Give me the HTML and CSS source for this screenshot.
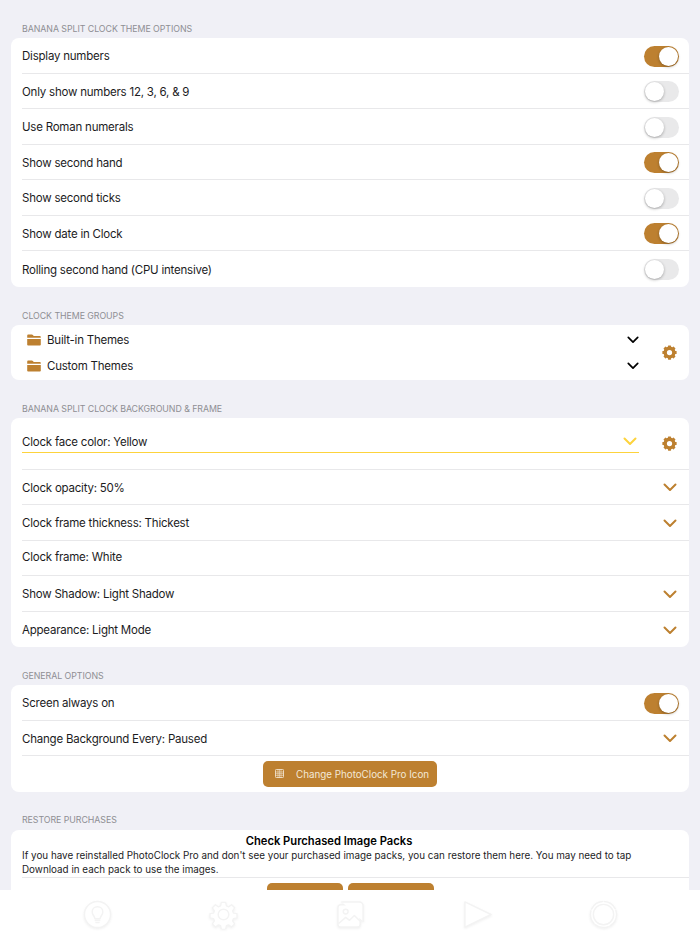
FILE: index.html
```html
<!DOCTYPE html>
<html lang="en">
<head>
    <meta charset="UTF-8">
    <meta name="viewport" content="width=device-width, initial-scale=1.0">
    <title>PhotoClock Pro - Settings</title>
    <link rel="stylesheet" href="styles.css">
</head>
<body>

<svg class="defs" width="0" height="0">
    <symbol id="chevron" viewBox="0 0 14 9"><path d="M1.5 1.500 7 7l5.500-5.500" fill="none" stroke="currentColor" stroke-width="2" stroke-linecap="round" stroke-linejoin="round"/></symbol>
    <symbol id="gear" viewBox="0 0 16 16"><circle cx="8" cy="8" r="4.600" fill="none" stroke="currentColor" stroke-width="3.600"/><g fill="currentColor"><rect x="6.300" y=".4" width="3.400" height="3" rx=".6"/><rect x="6.300" y="12.600" width="3.400" height="3" rx=".6"/><rect x=".4" y="6.300" width="3" height="3.400" rx=".6"/><rect x="12.600" y="6.300" width="3" height="3.400" rx=".6"/><rect x="6.300" y=".4" width="3.400" height="3" rx=".6" transform="rotate(45 8 8)"/><rect x="6.300" y="12.600" width="3.400" height="3" rx=".6" transform="rotate(45 8 8)"/><rect x=".4" y="6.300" width="3" height="3.400" rx=".6" transform="rotate(45 8 8)"/><rect x="12.600" y="6.300" width="3" height="3.400" rx=".6" transform="rotate(45 8 8)"/></g></symbol>
    <symbol id="folder" viewBox="0 0 14 12"><path d="M1.400.5h3.400c.5 0 .8.2 1.100.5l.8.9h5.900c.7 0 1.200.5 1.200 1.200v.7H.2V1.700C.2 1 .7.5 1.400.5Z" fill="currentColor"/><path d="M.2 4.900h13.600v5.500c0 .7-.5 1.100-1.200 1.100H1.400c-.7 0-1.200-.4-1.200-1.100Z" fill="currentColor"/></symbol>
</svg>

<div class="settings">

    <h3 class="section-title">Banana Split Clock Theme Options</h3>
    <div class="card">
        <div class="row"><span>Display numbers</span><span class="switch on"></span></div>
        <div class="row"><span>Only show numbers 12, 3, 6, &amp; 9</span><span class="switch"></span></div>
        <div class="row"><span>Use Roman numerals</span><span class="switch"></span></div>
        <div class="row"><span>Show second hand</span><span class="switch on"></span></div>
        <div class="row"><span>Show second ticks</span><span class="switch"></span></div>
        <div class="row"><span>Show date in Clock</span><span class="switch on"></span></div>
        <div class="row"><span>Rolling second hand (CPU intensive)</span><span class="switch"></span></div>
    </div>

    <h3 class="section-title">Clock Theme Groups</h3>
    <div class="card groups">
        <div class="group-list">
            <div class="group">
                <svg class="folder"><use href="#folder"/></svg>
                <span class="group-name">Built-in Themes</span>
                <svg class="chevron dark"><use href="#chevron"/></svg>
            </div>
            <div class="group">
                <svg class="folder"><use href="#folder"/></svg>
                <span class="group-name">Custom Themes</span>
                <svg class="chevron dark"><use href="#chevron"/></svg>
            </div>
        </div>
        <svg class="gear"><use href="#gear"/></svg>
    </div>

    <h3 class="section-title">Banana Split Clock Background &amp; Frame</h3>
    <div class="card">
        <div class="row row-color">
            <div class="color-select">
                <span>Clock face color: Yellow</span>
                <svg class="chevron yellow"><use href="#chevron"/></svg>
            </div>
            <svg class="gear"><use href="#gear"/></svg>
        </div>
        <div class="row"><span>Clock opacity: 50%</span><svg class="chevron"><use href="#chevron"/></svg></div>
        <div class="row"><span>Clock frame thickness: Thickest</span><svg class="chevron"><use href="#chevron"/></svg></div>
        <div class="row row-frame"><span>Clock frame: White</span></div>
        <div class="row"><span>Show Shadow: Light Shadow</span><svg class="chevron"><use href="#chevron"/></svg></div>
        <div class="row"><span>Appearance: Light Mode</span><svg class="chevron"><use href="#chevron"/></svg></div>
    </div>

    <h3 class="section-title">General Options</h3>
    <div class="card">
        <div class="row"><span>Screen always on</span><span class="switch on"></span></div>
        <div class="row"><span>Change Background Every: Paused</span><svg class="chevron"><use href="#chevron"/></svg></div>
        <div class="row row-center">
            <button class="btn btn-icon">
                <svg class="grid-icon" viewBox="0 0 10 10"><rect x=".5" y=".5" width="9" height="9" rx="1" fill="none" stroke="currentColor"/><path d="M.5 3.300h9M.5 5.200h9M.5 7.100h9M3.300.5v9M5 .5v9M6.700.5v9" stroke="currentColor" stroke-width=".6"/></svg>
                <span class="btn-label">Change PhotoClock Pro Icon</span>
            </button>
        </div>
    </div>

    <h3 class="section-title section-title-last">Restore Purchases</h3>
    <div class="card">
        <div class="restore">
            <h4>Check Purchased Image Packs</h4>
            <p>If you have reinstalled PhotoClock Pro and don't see your purchased image packs, you can restore them here. You may need to tap Download in each pack to use the images.</p>
        </div>
        <div class="restore-buttons">
            <button class="btn btn-restore"></button>
            <button class="btn btn-download"></button>
        </div>
    </div>
</div>

<!-- Tab bar, white icons on white -->
<div class="tabbar">
    <svg class="tab" viewBox="0 0 30 30"><circle cx="15" cy="15" r="13.500"/><path d="M15 7c-3.400 0-5.500 2.500-5.500 5.300 0 3 2.300 4 2.800 7h5.400c.5-3 2.800-4 2.800-7C20.500 9.500 18.400 7 15 7Zm-2.300 14.200h4.600M13.300 23.400h3.400"/></svg>
    <svg class="tab" viewBox="0 0 30 30"><path d="M12.500 1h5l.8 4.200 2.500 1 3.500-2.400 3.500 3.500-2.400 3.500 1 2.500 4.100.7v5l-4.100.8-1 2.500 2.400 3.500-3.500 3.500-3.500-2.400-2.500 1-.8 4.100h-5l-.8-4.100-2.500-1-3.500 2.400-3.500-3.500 2.400-3.500-1-2.500-4.100-.8v-5l4.100-.7 1-2.500-2.400-3.500 3.500-3.500 3.500 2.400 2.500-1Z" transform="translate(1.500 1.500) scale(.9)"/><circle cx="15" cy="15" r="5.500"/></svg>
    <svg class="tab" viewBox="0 0 30 30"><rect x="2" y="5" width="23" height="23" rx="3"/><path d="M6 2h18a4 4 0 0 1 4 4v16"/><circle cx="10" cy="12" r="2.500"/><path d="m3 24 7-6 4 3 5-5 6 6"/></svg>
    <svg class="tab" viewBox="0 0 30 30"><path d="M2 2 29 15 2 28Z"/></svg>
    <svg class="tab" viewBox="0 0 30 30"><circle cx="15" cy="15" r="13.500" stroke-dasharray="14 2"/><circle cx="15" cy="15" r="10.500"/></svg>
</div>

</body>
</html>
```

FILE: styles.css
```css
* {
    margin: 0;
    padding: 0;
    box-sizing: border-box;
}

body {
    font-family: Inter, 'Noto Sans', sans-serif;
    background: #f0f0f6;
    color: #1c1c1e;
    height: 934px;
    overflow: hidden;
}

.defs {
    position: absolute;
}

.settings {
    padding: 22px 11px 0;
}

.section-title {
    font-size: 8.8px;
    font-weight: 400;
    line-height: 11px;
    letter-spacing: -0.05px;
    text-transform: uppercase;
    color: #8e8e93;
    padding: 1px 0 0 11px;
    margin-bottom: 4px;
}

.card {
    background: #fff;
    border-radius: 8px;
    margin-bottom: 22px;
}

.row {
    display: flex;
    align-items: center;
    justify-content: space-between;
    height: 35.5px;
    margin-left: 11px;
    padding: 2px 10px 0 0;
    font-size: 11.5px;
    letter-spacing: -0.22px;
    border-bottom: 1px solid #e8e8ea;
}

.row:last-child {
    border-bottom: none;
}

.row > .chevron {
    margin-right: 2px;
}

.row-frame {
    padding-bottom: 4px;
}

.switch {
    position: relative;
    width: 35px;
    height: 21px;
    border-radius: 11px;
    background: #e9e9ea;
}

.switch::after {
    content: "";
    position: absolute;
    top: 1px;
    left: 1px;
    width: 19px;
    height: 19px;
    border-radius: 50%;
    background: #fff;
    box-shadow: 0 1px 3px rgba(0, 0, 0, 0.3);
}

.switch.on {
    background: #bd8030;
}

.switch.on::after {
    left: 15px;
}

.chevron {
    width: 14px;
    height: 9px;
    color: #bd8030;
}

.chevron.dark {
    color: #000;
    width: 12px;
    height: 8px;
}

.chevron.yellow {
    color: #fdd33c;
}

.gear {
    width: 15px;
    height: 15px;
    margin-right: 2px;
    color: #bd8030;
    flex-shrink: 0;
}

/* Theme groups */
.groups {
    display: flex;
    align-items: center;
    padding-right: 10px;
    height: 55.5px;
}

.group-list {
    flex: 1;
    padding: 1px 0 0 16px;
    margin-right: 23px;
}

.group {
    display: flex;
    align-items: center;
    height: 26px;
    font-size: 11.5px;
    letter-spacing: -0.22px;
}

.group-name {
    flex: 1;
}

.folder {
    width: 14px;
    height: 12px;
    margin-right: 6px;
    color: #bd8030;
}

/* Colour picker row */
.row-color {
    height: 51.5px;
    padding-top: 1px;
}

.color-select {
    display: flex;
    align-items: center;
    justify-content: space-between;
    width: 617px;
    height: 24px;
    margin-bottom: 5px;
    padding: 2px 2px 0 0;
    border-bottom: 1.5px solid #fdd33c;
}

/* Buttons */
.row-center {
    justify-content: center;
    margin-left: 0;
    padding: 0;
}

.btn {
    font-family: inherit;
    font-size: 9.8px;
    white-space: nowrap;
    color: #f4e8d6;
    background: #bd8030;
    border: none;
    border-radius: 5px;
}

.btn-icon {
    display: flex;
    align-items: center;
    width: 174px;
    height: 26px;
    padding-left: 12px;
}

.btn-label {
    padding-top: 1px;
}

.grid-icon {
    width: 9px;
    height: 9px;
    margin-right: 12px;
}

.section-title-last {
    padding-top: 0;
    margin-bottom: 5px;
}

.restore {
    margin-left: 11px;
    padding: 5px 10px 1px 0;
    border-bottom: 1px solid #e8e8ea;
}

.restore h4 {
    font-size: 11.2px;
    font-weight: 600;
    line-height: 13px;
    text-align: center;
    padding-right: 43px;
    color: #000;
}

.restore p {
    font-size: 9.85px;
    line-height: 14px;
    color: #1c1c1e;
}

.restore-buttons {
    display: flex;
    justify-content: center;
    gap: 5px;
    padding-top: 5px;
}

.btn-restore {
    width: 76px;
    height: 26px;
}

.btn-download {
    width: 86px;
    height: 26px;
}

.tabbar {
    position: fixed;
    left: 0;
    right: 0;
    bottom: 0;
    height: 44px;
    background: #fff;
    display: flex;
    justify-content: space-around;
    align-items: center;
    padding: 5px 33px 0 34px;
}

.tab {
    width: 29px;
    height: 29px;
    fill: #fff;
    stroke: #f3f3f3;
    stroke-width: 1.5;
    stroke-linejoin: round;
    stroke-linecap: round;
    filter: drop-shadow(0 1px 1px rgba(0, 0, 0, 0.06));
}
```
